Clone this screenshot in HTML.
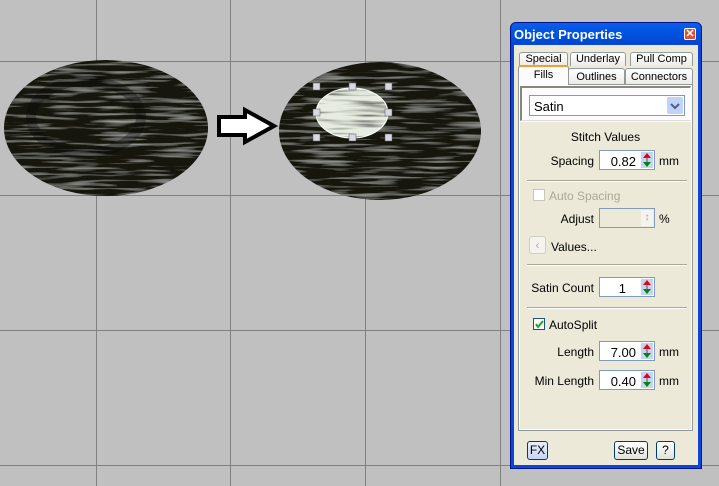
<!DOCTYPE html>
<html><head><style>
*{margin:0;padding:0;box-sizing:border-box}
body{width:719px;height:486px;background:#c0c0c0;position:relative;overflow:hidden;font-family:"Liberation Sans",sans-serif;font-size:12px;color:#000}
.a{position:absolute}
.lbl{position:absolute;text-align:right;white-space:nowrap;font-size:12px}
.inp{position:absolute;background:#fff;border:1px solid #7f9db9;height:20px}
.inp span{position:absolute;right:18px;top:3px;font-size:13px}
.spin{position:absolute;right:1px;top:1px;width:12px;height:16px;background:#c6d3f7}
.sep{position:absolute;left:527px;width:160px;height:2px;border-top:1px solid #aca899;border-bottom:1px solid #fff}
.tab{position:absolute;background:linear-gradient(#fff,#ecebe6);border:1px solid #919b9c;border-bottom:none;border-radius:3px 3px 0 0;text-align:center;font-size:11px}
.btn{position:absolute;border:1px solid #003c74;border-radius:3px;background:linear-gradient(#fff,#e3e2da);text-align:center;font-size:12px;line-height:17px}
</style></head><body>
<svg class="a" style="left:0;top:0" width="719" height="486">
<defs>
<filter id="st" x="0" y="0" width="100%" height="100%">
<feTurbulence type="fractalNoise" baseFrequency="0.02 0.3" numOctaves="2" seed="3"/>
<feColorMatrix values="0 0 0 0 0.33  0 0 0 0 0.34  0 0 0 0 0.31  0 0 0 -2.5 1.25"/>
<feComposite in2="SourceGraphic" operator="in"/>
<feMerge><feMergeNode in="SourceGraphic"/><feMergeNode/></feMerge>
</filter>
<filter id="wt"><feTurbulence type="fractalNoise" baseFrequency="0.02 0.3" numOctaves="2" seed="5"/>
<feColorMatrix values="0 0 0 0 0.1 0 0 0 0 0.1 0 0 0 0 0.1 0 0 0 -3 1.6"/>
<feComposite in2="SourceGraphic" operator="in"/>
<feMerge><feMergeNode in="SourceGraphic"/><feMergeNode/></feMerge></filter>
</defs>
<g stroke="#808080" stroke-width="1">
<line x1="96.5" y1="0" x2="96.5" y2="486"/><line x1="230.5" y1="0" x2="230.5" y2="486"/><line x1="365.5" y1="0" x2="365.5" y2="486"/><line x1="500.5" y1="0" x2="500.5" y2="486"/>
<line x1="0" y1="61.5" x2="719" y2="61.5"/><line x1="0" y1="195.5" x2="719" y2="195.5"/><line x1="0" y1="330.5" x2="719" y2="330.5"/><line x1="0" y1="465.5" x2="719" y2="465.5"/>
</g>
<ellipse cx="106" cy="128" rx="102" ry="68" fill="#131411" filter="url(#st)"/>
<ellipse cx="86" cy="117" rx="55" ry="36" fill="none" stroke="#0a0a09" stroke-width="10" opacity=".35"/>
<ellipse cx="380" cy="131" rx="101" ry="69" fill="#131411" filter="url(#st)"/>
<ellipse cx="352" cy="113" rx="36" ry="25" fill="#e6ece0" filter="url(#wt)"/>
<ellipse cx="352" cy="113" rx="36" ry="25" fill="none" stroke="#fff" stroke-width="1"/>
<g fill="#d8d8e0" stroke="#555" stroke-width=".5">
<rect x="313" y="83" width="7" height="7"/><rect x="349" y="83" width="7" height="7"/><rect x="385" y="83" width="7" height="7"/>
<rect x="313" y="109" width="7" height="7"/><rect x="385" y="109" width="7" height="7"/>
<rect x="313" y="134" width="7" height="7"/><rect x="349" y="134" width="7" height="7"/><rect x="385" y="134" width="7" height="7"/>
</g>
<path d="M219 117 H245 V110 L274 126 L245 142 V135 H219 Z" fill="#fff" stroke="#000" stroke-width="4" stroke-linejoin="miter"/>
</svg>

<div class="a" style="left:510px;top:22px;width:192px;height:447px;background:#0a46d8;border:1px solid #00138c;border-radius:6px 6px 0 0"></div>
<div class="a" style="left:511px;top:23px;width:190px;height:21px;background:linear-gradient(#0a5ee8,#0054e3 40%,#0048d0);border-radius:5px 5px 0 0"></div>
<div class="a" style="left:514px;top:27px;color:#fff;font-weight:bold;font-size:13px">Object Properties</div>
<div class="a" style="left:684px;top:28px;width:12px;height:12px;background:#e0502c;border:1px solid #fff;border-radius:2px;color:#fff;font-size:11px;line-height:10px;text-align:center;font-weight:bold">✕</div>
<div class="a" style="left:514px;top:45px;width:184px;height:420px;background:#ece9d8"></div>

<div class="tab" style="left:519px;top:52px;width:49px;height:14px;line-height:13px">Special</div>
<div class="tab" style="left:570px;top:52px;width:56px;height:14px;line-height:13px">Underlay</div>
<div class="tab" style="left:630px;top:52px;width:63px;height:14px;line-height:13px">Pull Comp</div>
<div class="tab" style="left:568px;top:68px;width:57px;height:16px;line-height:16px">Outlines</div>
<div class="tab" style="left:625px;top:68px;width:68px;height:16px;line-height:16px">Connectors</div>
<div class="a" style="left:518px;top:84px;width:175px;height:347px;background:#fcfcfe;border:1px solid #919b9c"></div>
<div class="tab" style="left:518px;top:65px;width:51px;height:20px;line-height:16px;background:#fcfcfe;border-top:2px solid #f0a030">Fills</div>
<div class="a" style="left:520px;top:86px;width:171px;height:35px;border:2px solid #8a8678;border-bottom:1px solid #ddd;border-right:1px solid #fff;background:#fcfcfe"></div>
<div class="a" style="left:529px;top:95px;width:156px;height:21px;background:#fff;border:1px solid #7f9db9"><span class="a" style="left:4px;top:3px;font-size:13px">Satin</span>
<div class="a" style="right:1px;top:1px;width:16px;height:17px;background:#c1d3fb;border-radius:2px"><svg width="16" height="17"><path d="M4 7L8 11L12 7" stroke="#4d6185" stroke-width="2" fill="none"/></svg></div></div>
<div class="a" style="left:520px;top:122px;width:171px;height:307px;background:#ece9d8"></div>
<div class="a" style="left:520px;top:130px;width:171px;text-align:center;font-size:12px">Stitch Values</div>

<div class="lbl" style="right:125px;top:154px">Spacing</div>
<div class="inp" style="left:599px;top:150px;width:56px"><span>0.82</span><div class="spin"><svg width="12" height="16"><path d="M6 1L2 6H10Z" fill="#e00"/><path d="M6 15L2 10H10Z" fill="#080"/><line x1="6" y1="5" x2="6" y2="11" stroke="#555"/></svg></div></div>
<div class="a" style="left:659px;top:154px">mm</div>
<div class="sep" style="top:180px"></div>

<div class="a" style="left:533px;top:189px;width:12px;height:12px;border:1px solid #c9c7ba;background:#fff"></div>
<div class="a" style="left:549px;top:189px;color:#aca899">Auto Spacing</div>
<div class="lbl" style="right:125px;top:212px">Adjust</div>
<div class="inp" style="left:599px;top:208px;width:56px;background:#ece9d8"><div class="spin" style="background:#f4f3ee;color:#aaa;text-align:center;font-size:10px;line-height:16px">↕</div></div>
<div class="a" style="left:659px;top:212px">%</div>
<div class="a" style="left:529px;top:236px;width:17px;height:18px;border:1px solid #d0cec0;border-radius:3px;background:#f4f3ee;color:#aaa;text-align:center;line-height:16px">‹</div>
<div class="a" style="left:551px;top:240px">Values...</div>
<div class="sep" style="top:264px"></div>

<div class="lbl" style="right:125px;top:281px">Satin Count</div>
<div class="inp" style="left:599px;top:277px;width:56px"><span style="right:28px">1</span><div class="spin"><svg width="12" height="16"><path d="M6 1L2 6H10Z" fill="#e00"/><path d="M6 15L2 10H10Z" fill="#080"/><line x1="6" y1="5" x2="6" y2="11" stroke="#555"/></svg></div></div>
<div class="sep" style="top:307px"></div>

<div class="a" style="left:533px;top:318px;width:12px;height:12px;border:1px solid #1c5180;background:#fff"><svg width="10" height="10" style="position:absolute;left:0;top:0"><path d="M2 5L4 8L9 2" stroke="#21a121" stroke-width="2" fill="none"/></svg></div>
<div class="a" style="left:549px;top:318px">AutoSplit</div>
<div class="lbl" style="right:125px;top:345px">Length</div>
<div class="inp" style="left:599px;top:341px;width:56px"><span>7.00</span><div class="spin"><svg width="12" height="16"><path d="M6 1L2 6H10Z" fill="#e00"/><path d="M6 15L2 10H10Z" fill="#080"/><line x1="6" y1="5" x2="6" y2="11" stroke="#555"/></svg></div></div>
<div class="a" style="left:659px;top:345px">mm</div>
<div class="lbl" style="right:125px;top:374px">Min Length</div>
<div class="inp" style="left:599px;top:370px;width:56px"><span>0.40</span><div class="spin"><svg width="12" height="16"><path d="M6 1L2 6H10Z" fill="#e00"/><path d="M6 15L2 10H10Z" fill="#080"/><line x1="6" y1="5" x2="6" y2="11" stroke="#555"/></svg></div></div>
<div class="a" style="left:659px;top:374px">mm</div>

<div class="btn" style="left:527px;top:441px;width:21px;height:19px;background:linear-gradient(#e8eefc,#c8d4f4)">FX</div>
<div class="btn" style="left:614px;top:441px;width:34px;height:19px">Save</div>
<div class="btn" style="left:656px;top:441px;width:19px;height:19px">?</div>
</body></html>
